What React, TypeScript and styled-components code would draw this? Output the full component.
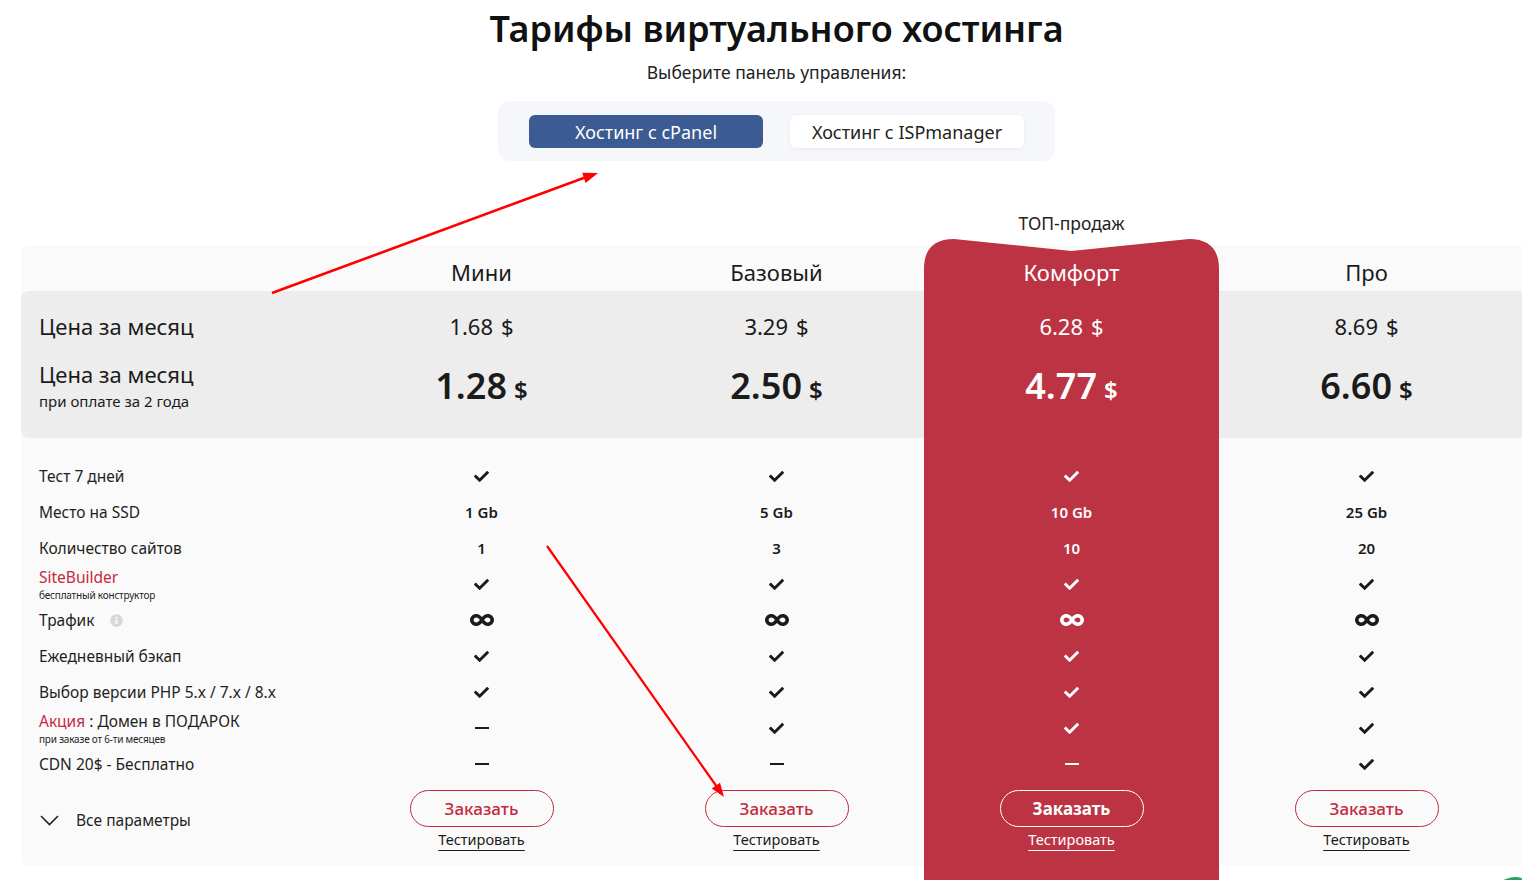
import React from 'react';
import styled, { createGlobalStyle, css } from 'styled-components';
import { FaCheck, FaInfinity, FaInfoCircle } from 'react-icons/fa';

const RED = '#bc3443';
const ACCENT = '#c52a40';

const GlobalStyle = createGlobalStyle`
  html, body { margin: 0; padding: 0; overflow: hidden; background: #fff; }
  body { font-family: 'Noto Sans', 'Open Sans', sans-serif; color: #1b1b1b; }
  * { box-sizing: border-box; }
`;

const Page = styled.div`
  position: relative;
  width: 1522px;
  height: 880px;
  overflow: hidden;
`;

const Intro = styled.section`
  display: flex;
  flex-direction: column;
  align-items: center;
  padding: 6px 0 0 31px;
`;

const Title = styled.h1`
  margin: 0;
  font-size: 36px;
  line-height: 46px;
  font-weight: 600;
  color: #111;
`;

const Subtitle = styled.p`
  margin: 8px 0 0;
  font-size: 17.5px;
  line-height: 24px;
  color: #222;
`;

const Switcher = styled.div`
  margin-top: 17px;
  width: 557px;
  height: 60px;
  display: flex;
  gap: 27px;
  padding: 14px 31px 13px;
  background: #f5f7fb;
  border-radius: 12px;
`;

const Tab = styled.button<{ $active?: boolean }>`
  width: 234px;
  height: 33px;
  border: none;
  border-radius: 6px;
  font-family: inherit;
  font-size: 18px;
  cursor: pointer;
  ${(p) =>
    p.$active
      ? css`
          background: #3b5b92;
          color: #fff;
        `
      : css`
          background: #fff;
          color: #222;
          box-shadow: 0 1px 4px rgba(0, 0, 0, 0.06);
        `}
`;

const Table = styled.div`
  display: flex;
  margin: 84px 0 0 21px;
  background: #fafafa;
  border-radius: 8px 0 0 8px;
`;

const Column = styled.div<{ $w?: number }>`
  ${(p) =>
    p.$w
      ? css`
          width: ${p.$w}px;
          flex-shrink: 0;
        `
      : css`
          flex: 1;
        `}
  display: flex;
  flex-direction: column;
`;

const FeaturedColumn = styled.div`
  width: 295px;
  flex-shrink: 0;
  margin: -34px 0 -30px;
  display: flex;
  flex-direction: column;
`;

const TopLabel = styled.div`
  height: 28px;
  padding-bottom: 4px;
  font-size: 17.5px;
  line-height: 24px;
  text-align: center;
  color: #222;
`;

const Card = styled.div`
  flex: 1;
  display: flex;
  flex-direction: column;
  background: ${RED};
  color: #fff;
  clip-path: path('M0 30 C0 10 10 0 30 0 L147.5 12 L265 0 C285 0 295 10 295 30 L295 2000 L0 2000 Z');
`;

const HeadCell = styled.div<{ $tall?: boolean }>`
  height: ${(p) => (p.$tall ? 52 : 46)}px;
  display: flex;
  align-items: flex-end;
  justify-content: center;
  padding-bottom: 4px;
  font-size: 22px;
  line-height: 30px;
`;

const PriceBlock = styled.div<{ $first?: boolean; $featured?: boolean }>`
  height: 147px;
  background: ${(p) => (p.$featured ? 'transparent' : '#ededed')};
  border-radius: ${(p) => (p.$first ? '8px 0 0 8px' : '0')};
  text-align: center;
`;

const MonthPrice = styled.div`
  height: 68px;
  padding-top: 19px;
  font-size: 22px;
  line-height: 32px;
  & span {
    margin-left: 8px;
  }
`;

const BigPrice = styled.div`
  padding-top: 3px;
  font-size: 36px;
  line-height: 48px;
  font-weight: 600;
  & span {
    font-size: 24px;
    margin-left: 7px;
  }
`;

const PriceLabel = styled.div`
  padding-left: 18px;
  text-align: left;
`;

const PriceLabelTop = styled.div`
  height: 68px;
  padding-top: 19px;
  font-size: 22px;
  line-height: 32px;
`;

const PriceLabelMain = styled.div`
  padding-top: 1px;
  font-size: 22px;
  line-height: 28px;
`;

const PriceLabelSub = styled.div`
  margin-top: 3px;
  font-size: 15px;
  line-height: 20px;
`;

const Features = styled.div`
  padding-top: 20px;
`;

const ValueCell = styled.div`
  height: 36px;
  display: flex;
  align-items: center;
  justify-content: center;
  font-size: 15px;
  font-weight: 600;
`;

const LabelCell = styled.div`
  height: 36px;
  padding-left: 18px;
  display: flex;
  flex-direction: column;
  justify-content: center;
  font-size: 15.5px;
  line-height: 20px;
  color: #1f1f1f;
`;

const LabelRow = styled.div`
  display: flex;
  align-items: center;
  gap: 16px;
`;

const Accent = styled.span`
  color: ${ACCENT};
`;

const Hint = styled.div`
  font-size: 10px;
  line-height: 16px;
  letter-spacing: -0.2px;
`;

const Stacked = styled.div`
  margin-top: 2px;
`;

const Dash = styled.span`
  width: 14px;
  height: 1.5px;
  background: currentColor;
`;

const Footer = styled.div`
  padding: 8px 0 17px;
  display: flex;
  flex-direction: column;
  align-items: center;
`;

const OrderButton = styled.button<{ $inverse?: boolean }>`
  width: 144px;
  height: 37px;
  border-radius: 19px;
  background: transparent;
  font-family: inherit;
  font-size: 17px;
  cursor: pointer;
  ${(p) =>
    p.$inverse
      ? css`
          border: 1.5px solid #fff;
          color: #fff;
          font-weight: 700;
        `
      : css`
          border: 1.5px solid ${ACCENT};
          color: ${ACCENT};
          font-weight: 500;
        `}
`;

const TestLink = styled.a<{ $inverse?: boolean }>`
  margin-top: 2px;
  font-size: 14.5px;
  line-height: 20px;
  color: ${(p) => (p.$inverse ? '#fff' : '#1b1b1b')};
  text-decoration: underline;
  text-underline-offset: 5px;
  text-decoration-thickness: 1px;
`;

const AllParams = styled.div`
  margin-top: 26px;
  padding-left: 19px;
  display: flex;
  align-items: center;
  gap: 17px;
  font-size: 15.5px;
  line-height: 24px;
  color: #1f1f1f;
`;

const Overlay = styled.svg`
  position: absolute;
  left: 0;
  top: 0;
  pointer-events: none;
`;

const ChatBubble = styled.div`
  position: absolute;
  right: -15px;
  bottom: -41px;
  width: 44px;
  height: 44px;
  border-radius: 50%;
  background: #27a35a;
`;

type Plan = {
  name: string;
  month: string;
  twoYears: string;
  ssd: string;
  sites: string;
  domain: boolean;
  cdn: boolean;
  featured?: boolean;
};

const plans: Plan[] = [
  { name: 'Мини', month: '1.68', twoYears: '1.28', ssd: '1 Gb', sites: '1', domain: false, cdn: false },
  { name: 'Базовый', month: '3.29', twoYears: '2.50', ssd: '5 Gb', sites: '3', domain: true, cdn: false },
  { name: 'Комфорт', month: '6.28', twoYears: '4.77', ssd: '10 Gb', sites: '10', domain: true, cdn: false, featured: true },
  { name: 'Про', month: '8.69', twoYears: '6.60', ssd: '25 Gb', sites: '20', domain: true, cdn: true },
];

const Check = () => <FaCheck size={15} />;
const Yes = ({ on }: { on: boolean }) => (on ? <Check /> : <Dash />);

const PlanBody = ({ plan }: { plan: Plan }) => {
  const values: React.ReactNode[] = [
    <Check />,
    plan.ssd,
    plan.sites,
    <Check />,
    <FaInfinity size={24} />,
    <Check />,
    <Check />,
    <Yes on={plan.domain} />,
    <Yes on={plan.cdn} />,
  ];
  return (
    <>
      <HeadCell $tall={plan.featured}>{plan.name}</HeadCell>
      <PriceBlock $featured={plan.featured}>
        <MonthPrice>
          {plan.month}
          <span>$</span>
        </MonthPrice>
        <BigPrice>
          {plan.twoYears}
          <span>$</span>
        </BigPrice>
      </PriceBlock>
      <Features>
        {values.map((v, i) => (
          <ValueCell key={i}>{v}</ValueCell>
        ))}
      </Features>
      <Footer>
        <OrderButton $inverse={plan.featured}>Заказать</OrderButton>
        <TestLink $inverse={plan.featured}>Тестировать</TestLink>
      </Footer>
    </>
  );
};

export default function App() {
  return (
    <Page>
      <GlobalStyle />
      <Intro>
        <Title>Тарифы виртуального хостинга</Title>
        <Subtitle>Выберите панель управления:</Subtitle>
        <Switcher>
          <Tab $active>Хостинг с cPanel</Tab>
          <Tab>Хостинг с ISPmanager</Tab>
        </Switcher>
      </Intro>

      <Table>
        <Column $w={313}>
          <HeadCell />
          <PriceBlock $first>
            <PriceLabel>
              <PriceLabelTop>Цена за месяц</PriceLabelTop>
              <PriceLabelMain>Цена за месяц</PriceLabelMain>
              <PriceLabelSub>при оплате за 2 года</PriceLabelSub>
            </PriceLabel>
          </PriceBlock>
          <Features>
            <LabelCell>Тест 7 дней</LabelCell>
            <LabelCell>Место на SSD</LabelCell>
            <LabelCell>Количество сайтов</LabelCell>
            <LabelCell>
              <Stacked>
                <Accent>SiteBuilder</Accent>
                <Hint>бесплатный конструктор</Hint>
              </Stacked>
            </LabelCell>
            <LabelCell>
              <LabelRow>
                Трафик
                <FaInfoCircle size={13} color="#d8d8d8" />
              </LabelRow>
            </LabelCell>
            <LabelCell>Ежедневный бэкап</LabelCell>
            <LabelCell>Выбор версии PHP 5.x / 7.x / 8.x</LabelCell>
            <LabelCell>
              <Stacked>
                <div>
                  <Accent>Акция</Accent> : Домен в ПОДАРОК
                </div>
                <Hint>при заказе от 6-ти месяцев</Hint>
              </Stacked>
            </LabelCell>
            <LabelCell>CDN 20$ - Бесплатно</LabelCell>
          </Features>
          <AllParams>
            <svg width="19" height="11" viewBox="0 0 19 11">
              <polyline points="1,1 9.5,9.5 18,1" fill="none" stroke="#222" strokeWidth="1.6" />
            </svg>
            Все параметры
          </AllParams>
        </Column>

        {plans.map((plan) =>
          plan.featured ? (
            <FeaturedColumn key={plan.name}>
              <TopLabel>ТОП-продаж</TopLabel>
              <Card>
                <PlanBody plan={plan} />
              </Card>
            </FeaturedColumn>
          ) : (
            <Column $w={295} key={plan.name}>
              <PlanBody plan={plan} />
            </Column>
          )
        )}

        <Column>
          <HeadCell />
          <PriceBlock />
        </Column>
      </Table>

      <Overlay width="1522" height="880">
        <line x1="272" y1="293" x2="585" y2="177.5" stroke="#f00" strokeWidth="2.6" />
        <polygon points="598,173 585.6,183 582.2,172.8" fill="#f00" />
        <line x1="547" y1="546" x2="717" y2="787" stroke="#f00" strokeWidth="2.2" />
        <polygon points="724,797 711.8,788.4 720,782.7" fill="#f00" />
      </Overlay>
      <ChatBubble />
    </Page>
  );
}
